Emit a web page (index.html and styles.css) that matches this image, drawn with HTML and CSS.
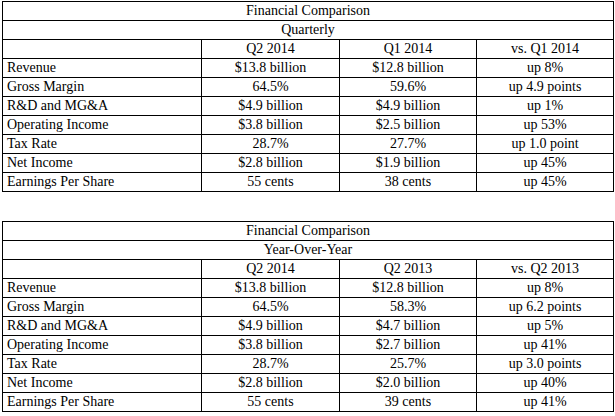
FILE: index.html
```html
<!DOCTYPE html>
<html>
<head>
<meta charset="utf-8">
<link rel="stylesheet" href="styles.css">
</head>
<body>
<div class="page">
<table class="fin">
<colgroup><col class="c1"><col class="c2"><col class="c3"><col class="c4"></colgroup>
<tr><td colspan="4" class="ctr">Financial Comparison</td></tr>
<tr><td colspan="4" class="ctr">Quarterly</td></tr>
<tr><td></td><td class="ctr">Q2 2014</td><td class="ctr">Q1 2014</td><td class="ctr">vs. Q1 2014</td></tr>
<tr><td>Revenue</td><td class="ctr">$13.8 billion</td><td class="ctr">$12.8 billion</td><td class="ctr">up 8%</td></tr>
<tr><td>Gross Margin</td><td class="ctr">64.5%</td><td class="ctr">59.6%</td><td class="ctr">up 4.9 points</td></tr>
<tr><td>R&amp;D and MG&amp;A</td><td class="ctr">$4.9 billion</td><td class="ctr">$4.9 billion</td><td class="ctr">up 1%</td></tr>
<tr><td>Operating Income</td><td class="ctr">$3.8 billion</td><td class="ctr">$2.5 billion</td><td class="ctr">up 53%</td></tr>
<tr><td>Tax Rate</td><td class="ctr">28.7%</td><td class="ctr">27.7%</td><td class="ctr">up 1.0 point</td></tr>
<tr><td>Net Income</td><td class="ctr">$2.8 billion</td><td class="ctr">$1.9 billion</td><td class="ctr">up 45%</td></tr>
<tr><td>Earnings Per Share</td><td class="ctr">55 cents</td><td class="ctr">38 cents</td><td class="ctr">up 45%</td></tr>
</table>
<table class="fin second">
<colgroup><col class="c1"><col class="c2"><col class="c3"><col class="c4"></colgroup>
<tr><td colspan="4" class="ctr">Financial Comparison</td></tr>
<tr><td colspan="4" class="ctr">Year-Over-Year</td></tr>
<tr><td></td><td class="ctr">Q2 2014</td><td class="ctr">Q2 2013</td><td class="ctr">vs. Q2 2013</td></tr>
<tr><td>Revenue</td><td class="ctr">$13.8 billion</td><td class="ctr">$12.8 billion</td><td class="ctr">up 8%</td></tr>
<tr><td>Gross Margin</td><td class="ctr">64.5%</td><td class="ctr">58.3%</td><td class="ctr">up 6.2 points</td></tr>
<tr><td>R&amp;D and MG&amp;A</td><td class="ctr">$4.9 billion</td><td class="ctr">$4.7 billion</td><td class="ctr">up 5%</td></tr>
<tr><td>Operating Income</td><td class="ctr">$3.8 billion</td><td class="ctr">$2.7 billion</td><td class="ctr">up 41%</td></tr>
<tr><td>Tax Rate</td><td class="ctr">28.7%</td><td class="ctr">25.7%</td><td class="ctr">up 3.0 points</td></tr>
<tr><td>Net Income</td><td class="ctr">$2.8 billion</td><td class="ctr">$2.0 billion</td><td class="ctr">up 40%</td></tr>
<tr><td>Earnings Per Share</td><td class="ctr">55 cents</td><td class="ctr">39 cents</td><td class="ctr">up 41%</td></tr>
</table>
</div>
</body>
</html>
```
FILE: styles.css
```css
html, body {
  margin: 0;
  padding: 0;
  background: #ffffff;
}
.page {
  padding: 1px 0 0 2px;
}
.fin {
  border-collapse: collapse;
  width: 611px;
  table-layout: fixed;
  font-family: "Liberation Serif", "Times New Roman", serif;
  font-size: 14px;
  color: #000;
}
.fin td {
  border: 1px solid #000;
  padding: 0 0 0 4px;
  height: 18px;
  line-height: 18px;
  white-space: nowrap;
}
.fin td.ctr {
  text-align: center;
  padding: 0;
}
.c1 { width: 199px; }
.c2 { width: 138px; }
.c3 { width: 137px; }
.c4 { width: 137px; }
.second {
  margin-top: 29px;
}
```
